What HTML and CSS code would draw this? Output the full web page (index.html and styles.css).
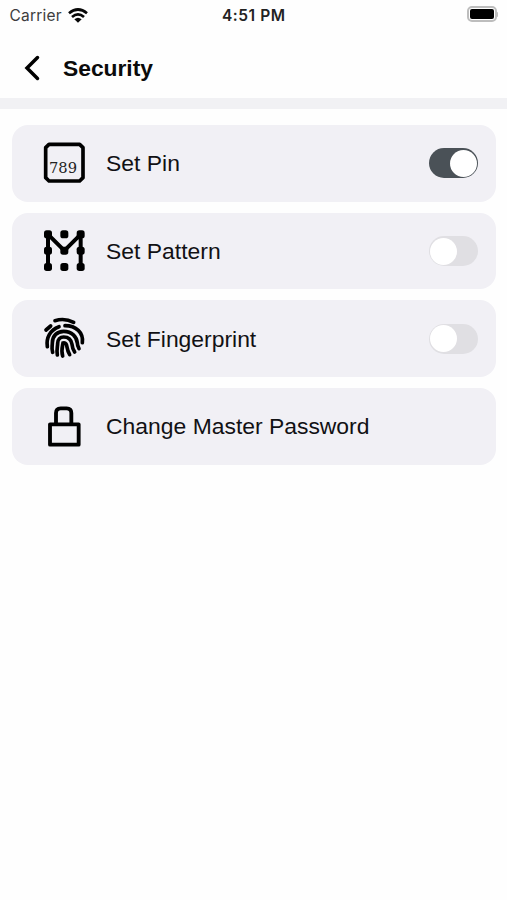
FILE: index.html
```html
<!DOCTYPE html>
<html lang="en">
<head>
<meta charset="utf-8">
<title>Security</title>
<link rel="stylesheet" href="styles.css">
</head>
<body>
<div class="status">
  <div class="carrier"><span>Carrier</span>
    <svg class="wifi" viewBox="0 0 60 45" aria-hidden="true"><g fill="none" stroke="#080808" stroke-width="8"><path d="M3 16Q30-7 57 16"/><path d="M12 27Q30 11 48 27"/></g><path d="M19 34Q30 25 41 34L30 44Z" fill="#080808"/></svg>
  </div>
  <span class="time">4:51 PM</span>
  <div class="power"><span class="battery"></span><span class="tip"></span></div>
</div>
<header class="header">
  <svg class="back" viewBox="0 0 16 26" aria-hidden="true"><path d="M13.5 2.5 3 13 13.5 23.5" fill="none" stroke="#000" stroke-width="3.5" stroke-linecap="round"/></svg>
  <h1>Security</h1>
</header>
<main class="list">
  <div class="card">
    <svg class="icon" viewBox="0 0 168 168" aria-hidden="true"><path d="M39 25H131L141 35V125L131 135H39L29 125V35Z" fill="none" stroke="#000" stroke-width="11" stroke-linejoin="round"/><text x="81" y="112" class="digits">789</text></svg>
    <span class="label">Set Pin</span><span class="switch on"></span>
  </div>
  <div class="card">
    <svg class="icon" viewBox="0 0 168 168" aria-hidden="true"><path d="M36 130V31L85 80 134 31V130" fill="none" stroke="#000" stroke-width="12" stroke-linejoin="round"/><g class="nodes"><rect x="24" y="19" width="24" height="24" rx="8"/><rect x="73" y="19" width="24" height="24" rx="8"/><rect x="122" y="19" width="24" height="24" rx="8"/><rect x="24" y="68" width="24" height="24" rx="8"/><rect x="73" y="68" width="24" height="24" rx="8"/><rect x="122" y="68" width="24" height="24" rx="8"/><rect x="24" y="117" width="24" height="24" rx="8"/><rect x="73" y="117" width="24" height="24" rx="8"/><rect x="122" y="117" width="24" height="24" rx="8"/></g></svg>
    <span class="label">Set Pattern</span><span class="switch"></span>
  </div>
  <div class="card">
    <svg class="icon" viewBox="0 0 168 168" aria-hidden="true"><g fill="none" stroke="#000" stroke-width="11" stroke-linecap="round"><path d="M57 26Q86 17 113 31"/><path d="M30 54 44 42"/><path d="M34 104C30 78 42 54 69 44"/><path d="M87 41C120 41 143 62 139 92"/><path d="M50 121C46 109 49 103 49 93C49 71 64 58 83 58C108 58 122 74 124 93Q124 101 129 110"/><path d="M64 129C61 113 65 104 65 94C65 82 72 75 83 75C98 75 106 84 108 97Q109 109 116 120"/><path d="M80 132C75 115 79 104 81 93C90 91 92 98 93 105Q95 118 101 128"/></g></svg>
    <span class="label">Set Fingerprint</span><span class="switch"></span>
  </div>
  <div class="card">
    <svg class="icon" viewBox="0 0 168 168" aria-hidden="true"><path d="M42 76H128V137H42ZM60 76V42Q60 28 74 28H92Q106 28 106 42V76" fill="none" stroke="#000" stroke-width="11.5" stroke-linejoin="round"/></svg>
    <span class="label">Change Master Password</span>
  </div>
</main>
</body>
</html>
```
FILE: styles.css
```css
* { box-sizing: border-box; }
body { margin: 0; min-height: 900px; background: #fefefe; color: #111114; font-family: "Liberation Sans", Arial, sans-serif; }
.status { display: grid; grid-template-columns: 1fr auto 1fr; align-items: center; height: 30px; padding: 0 9px 0 9.5px; font-family: Inter, sans-serif; }
.carrier { display: flex; align-items: center; gap: 6.5px; font-size: 15.5px; letter-spacing: .2px; color: #3d3d3d; }
.wifi { width: 20px; height: 15px; }
.time { font-size: 15.5px; font-weight: 600; letter-spacing: .55px; color: #222; }
.power { display: flex; align-items: center; justify-content: flex-end; gap: 0; margin-top: -2px; }
.battery { width: 30px; height: 16px; border: 2px solid #bdbdbd; border-radius: 5px; background: #000; background-clip: content-box; padding: 1px; }
.tip { width: 1.5px; height: 5px; border-radius: 0 2px 2px 0; background: #bdbdbd; }
.header { display: flex; align-items: center; height: 79px; padding: 0 0 2px 24px; border-bottom: 11px solid #f1f1f4; }
.back { width: 16px; height: 26px; margin: 10px 23px 0 0; }
h1 { margin: 10px 0 0; font-size: 22.8px; line-height: 26px; font-weight: 700; color: #0b0b0b; }
.list { display: flex; flex-direction: column; gap: 11px; padding: 16px 11px 0 12px; }
.card { display: flex; align-items: center; height: 76.7px; padding: 0 18px 0 24px; border-radius: 16px; background: #f1f0f5; }
.icon { width: 56px; height: 56px; margin: 2px 14.1px 0 0; }
.digits { font: 44px "DejaVu Serif", serif; text-anchor: middle; fill: #222; }
.label { flex: 1; font-size: 22.9px; line-height: 28px; }
.switch { display: flex; align-items: center; width: 49px; height: 30px; padding: 1px; border-radius: 15px; background: #e0dfe3; }
.switch::before { content: ""; width: 27px; height: 27px; border-radius: 50%; background: #fff; }
.switch.on { justify-content: flex-end; background: #4a5157; }
```
